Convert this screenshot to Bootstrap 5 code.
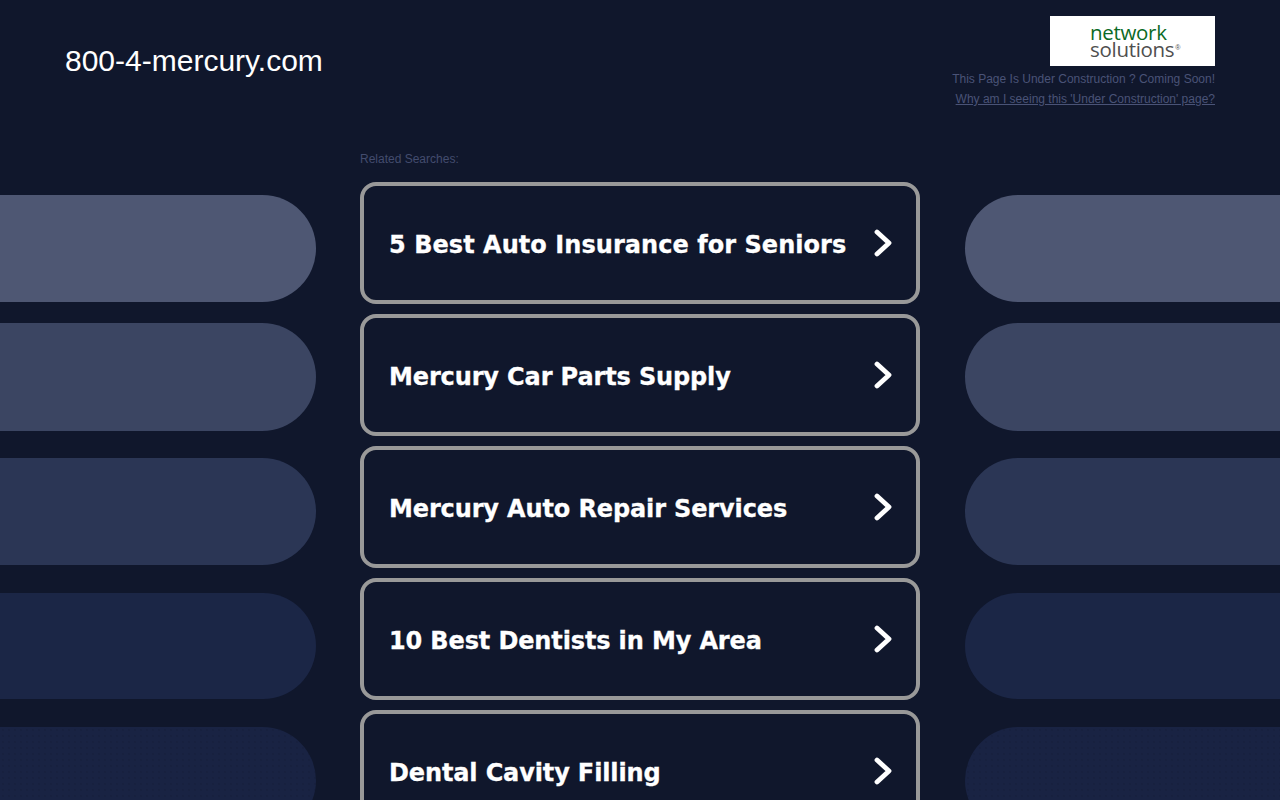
<!DOCTYPE html>
<html lang="en">
<head>
<meta charset="utf-8">
<title>800-4-mercury.com</title>
<link href="https://cdn.jsdelivr.net/npm/bootstrap@5.3.0/dist/css/bootstrap.min.css" rel="stylesheet">
<style>
html,body{height:800px;overflow:hidden;background:#10172c;}
body{font-family:"Liberation Sans",Arial,sans-serif;}
.top-bar{height:150px;padding:16px 65px 0 65px;}
.site-title{font-size:30px;line-height:34px;color:#fff;margin:28px 0 0;font-weight:400;}
.brand-box{width:165px;height:50px;background:#fff;font-family:"Open Sans",sans-serif;padding:6px 0 0 40px;line-height:1;text-align:left;}
.brand-a{color:#0b6a25;font-size:20.5px;line-height:20px;letter-spacing:-.3px;display:block;}
.brand-b{color:#4f4f4f;font-size:20.5px;line-height:15px;letter-spacing:-.3px;display:block;}
.brand-b sup{font-family:"Liberation Sans",sans-serif;font-size:7px;top:-7px;letter-spacing:0;margin-left:1px;vertical-align:baseline;position:relative;}
.note{font-size:12px;line-height:20px;color:#4a5377;margin:3px 0 0;}
.note a{color:#4a5377;}
.note-line{display:block;}
.stage{height:650px;}
.side{width:316px;flex:none;padding-top:45px;}
.side-r{width:315px;margin-left:1px;}
.mid{width:560px;flex:none;margin:0 44px;}
.label{font-size:12px;line-height:14px;color:#434c6e;margin:2px 0 16px;}
.pill{height:107px;border-radius:0 54px 54px 0;}
.side-r .pill{border-radius:54px 0 0 54px;}
.p1{background:#4e5773;}
.p2{background:#3b4562;margin-top:21px;height:108px;}
.p3{background:#2b3655;margin-top:27px;}
.p4{background:#1b2646;margin-top:28px;height:106px;}
.p5{background:#192343 radial-gradient(rgba(16,23,44,.35) .6px,transparent .8px) 0 0/6px 6px;margin-top:28px;height:107px;}
.search-link{height:122px;border:4px solid #999;border-radius:16px;background:#10172c;color:#fff;text-decoration:none;padding:0 25px;margin-bottom:10px;font-family:"DejaVu Sans",sans-serif;font-weight:700;font-size:24px;letter-spacing:-.13px;white-space:nowrap;-webkit-text-stroke:.3px #fff;}
.search-link:hover{color:#fff;}
.search-link span{position:relative;top:2px;}
.search-link .wide-text{letter-spacing:.05px;}
.chev{width:18px;height:28px;flex:none;margin-right:-1px;}
</style>
</head>
<body>
<header class="top-bar d-flex justify-content-between align-items-start">
  <h1 class="site-title">800-4-mercury.com</h1>
  <div class="d-flex flex-column align-items-end text-end">
    <div class="brand-box">
      <span class="brand-a">network</span>
      <span class="brand-b">solutions<sup>®</sup></span>
    </div>
    <p class="note">
      <span class="note-line">This Page Is Under Construction ? Coming Soon!</span>
      <a class="note-line" href="#">Why am I seeing this 'Under Construction' page?</a>
    </p>
  </div>
</header>
<main class="stage d-flex">
  <div class="side">
    <div class="pill p1"></div><div class="pill p2"></div><div class="pill p3"></div><div class="pill p4"></div><div class="pill p5"></div>
  </div>
  <div class="mid">
    <p class="label">Related Searches:</p>
    <a class="search-link d-flex justify-content-between align-items-center" href="#"><span class="wide-text">5 Best Auto Insurance for Seniors</span><svg class="chev" viewBox="0 0 18 28"><path d="M3 3 L15 14 L3 25" fill="none" stroke="#fff" stroke-width="4.8" stroke-linecap="round" stroke-linejoin="round"/></svg></a>
    <a class="search-link d-flex justify-content-between align-items-center" href="#"><span>Mercury Car Parts Supply</span><svg class="chev" viewBox="0 0 18 28"><path d="M3 3 L15 14 L3 25" fill="none" stroke="#fff" stroke-width="4.8" stroke-linecap="round" stroke-linejoin="round"/></svg></a>
    <a class="search-link d-flex justify-content-between align-items-center" href="#"><span>Mercury Auto Repair Services</span><svg class="chev" viewBox="0 0 18 28"><path d="M3 3 L15 14 L3 25" fill="none" stroke="#fff" stroke-width="4.8" stroke-linecap="round" stroke-linejoin="round"/></svg></a>
    <a class="search-link d-flex justify-content-between align-items-center" href="#"><span>10 Best Dentists in My Area</span><svg class="chev" viewBox="0 0 18 28"><path d="M3 3 L15 14 L3 25" fill="none" stroke="#fff" stroke-width="4.8" stroke-linecap="round" stroke-linejoin="round"/></svg></a>
    <a class="search-link d-flex justify-content-between align-items-center" href="#"><span>Dental Cavity Filling</span><svg class="chev" viewBox="0 0 18 28"><path d="M3 3 L15 14 L3 25" fill="none" stroke="#fff" stroke-width="4.8" stroke-linecap="round" stroke-linejoin="round"/></svg></a>
  </div>
  <div class="side side-r">
    <div class="pill p1"></div><div class="pill p2"></div><div class="pill p3"></div><div class="pill p4"></div><div class="pill p5"></div>
  </div>
</main>
</body>
</html>
